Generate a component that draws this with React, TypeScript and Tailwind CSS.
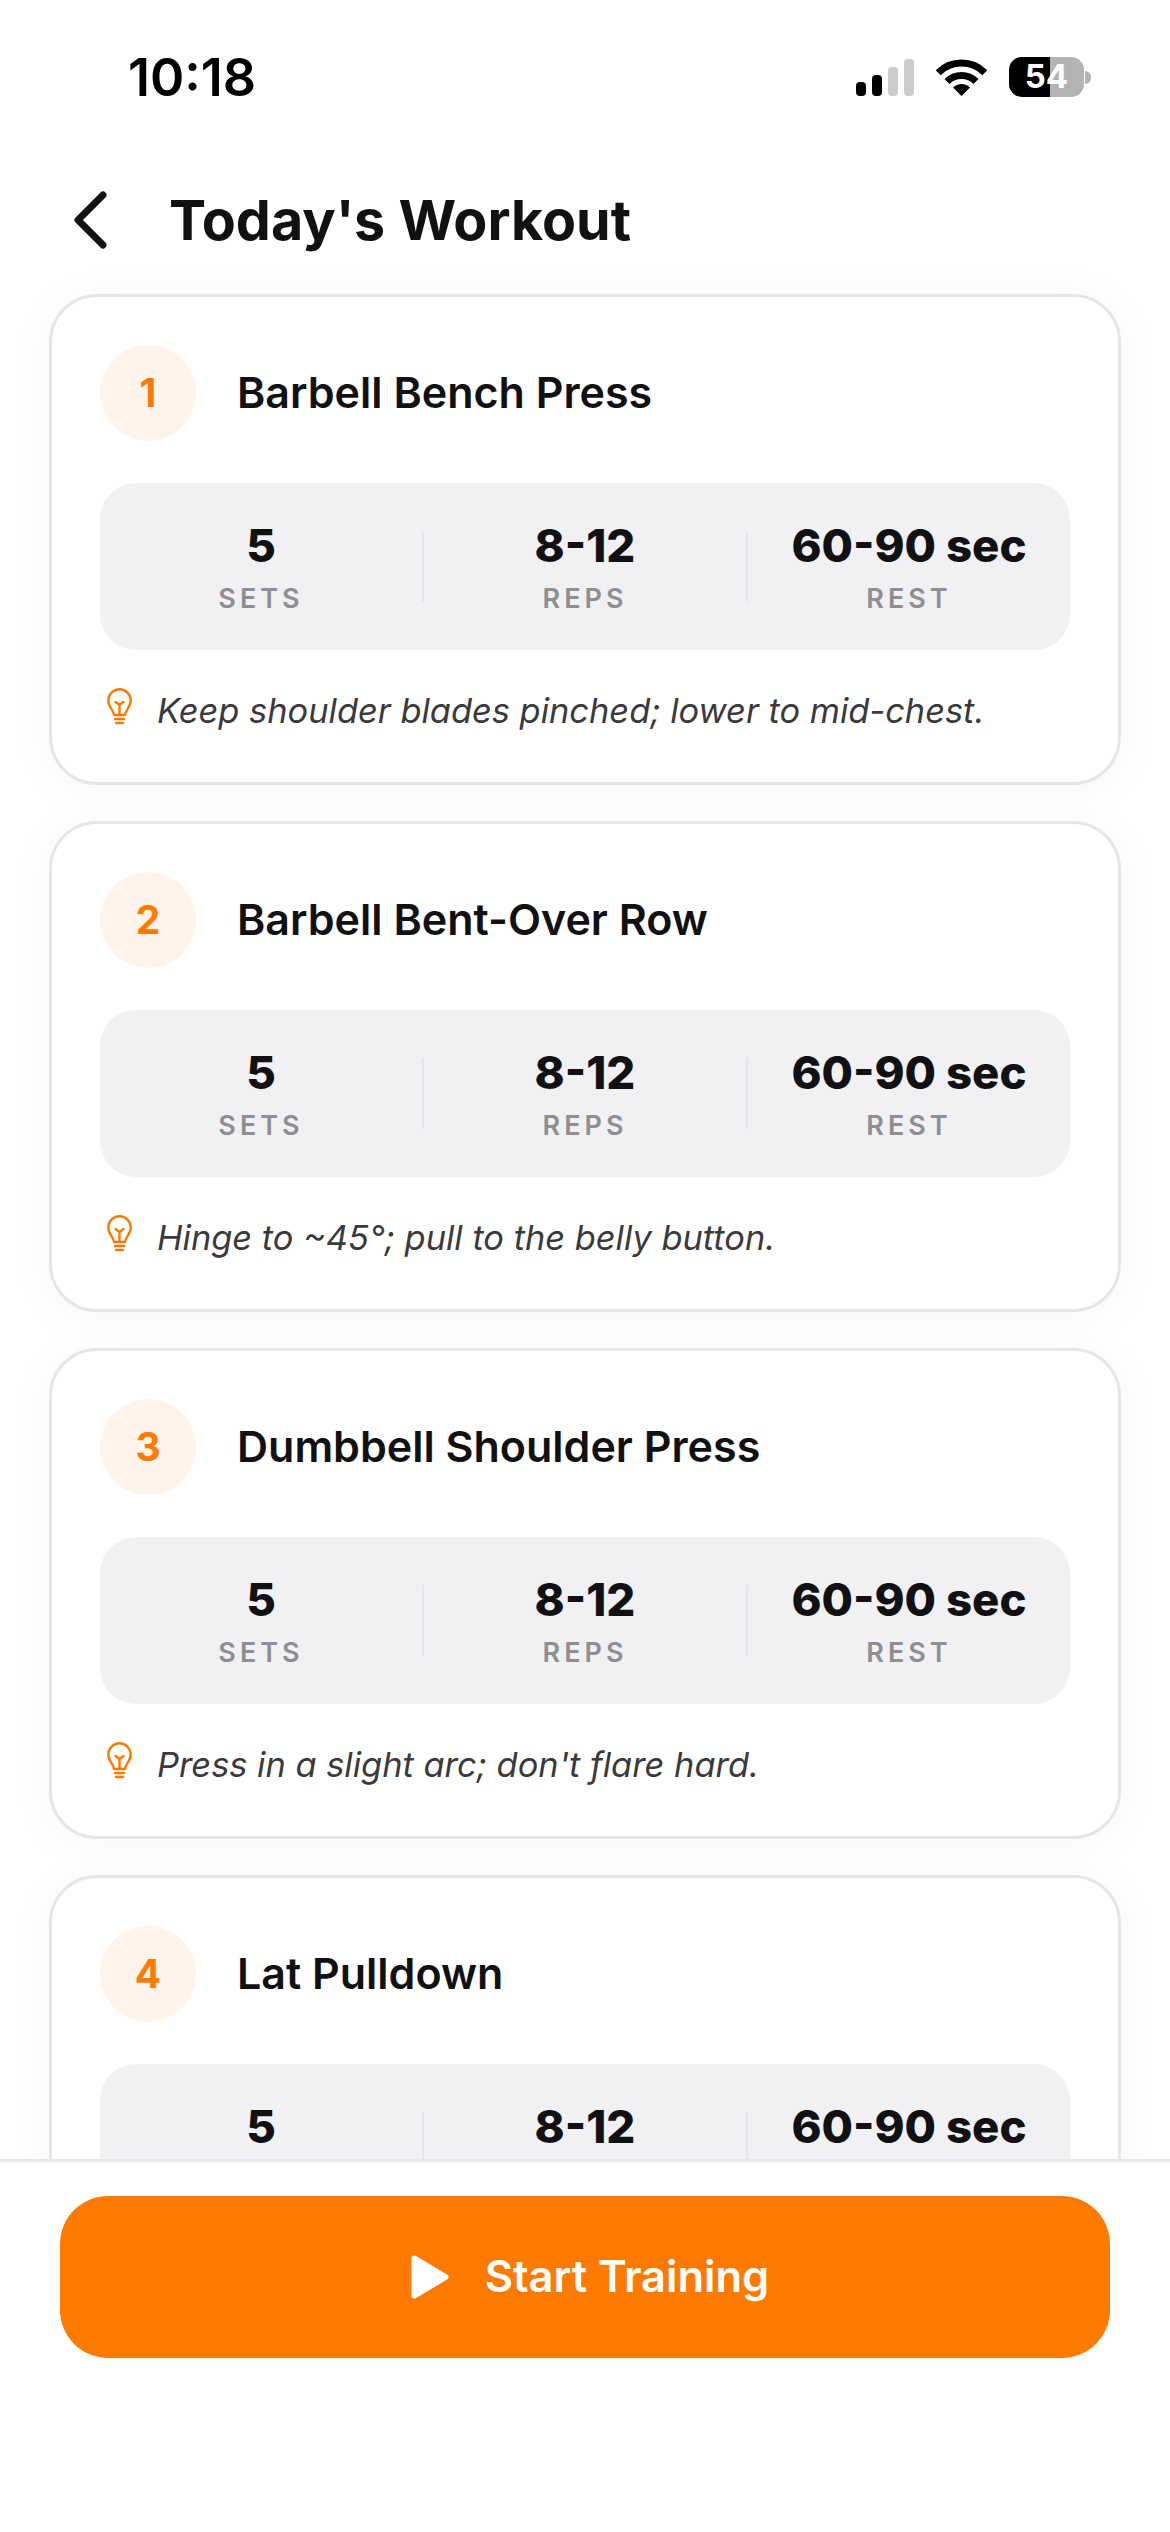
const exercises = [
  { name: "Barbell Bench Press", tip: "Keep shoulder blades pinched; lower to mid-chest." },
  { name: "Barbell Bent-Over Row", tip: "Hinge to ~45°; pull to the belly button." },
  { name: "Dumbbell Shoulder Press", tip: "Press in a slight arc; don't flare hard." },
  { name: "Lat Pulldown", tip: "Pull to the upper chest; keep your torso still." },
];

function Stat({ value, label }: { value: string; label: string }) {
  return (
    <div className="flex-1 flex flex-col items-center">
      <div className="text-[45.5px] leading-[56px] font-extrabold text-[#111113]">{value}</div>
      <div className="text-[27px] leading-[32px] mt-[9px] font-semibold tracking-[4px] text-[#8e8e93]">{label}</div>
    </div>
  );
}

function BulbIcon() {
  return (
    <svg width="25" height="37" viewBox="0 0 25 37" fill="none" stroke="#ff7a00" strokeWidth="2.4" strokeLinecap="round" strokeLinejoin="round" className="shrink-0 ml-[7px]">
      <path d="M7 27C7 22.5 1.3 19.5 1.3 12.5A11.2 11.2 0 0 1 23.7 12.5C23.7 19.5 18 22.5 18 27Z" />
      <path d="M12.5 27V16.5M8.5 14L12.5 17L16.5 14" />
      <path d="M8 31H17M9 35H16" />
    </svg>
  );
}

function ExerciseCard({ index, name, tip }: { index: number; name: string; tip: string }) {
  return (
    <div className="shrink-0 h-[491px] bg-white border-[3px] border-[#e5e5ea] rounded-[48px] p-[48px] shadow-[0_4px_48px_rgba(0,0,0,0.04)]">
      <div className="flex items-center gap-[41px]">
        <div className="w-[96px] h-[96px] rounded-full bg-[#fff4ec] flex items-center justify-center text-[39px] font-bold text-[#ff7a00]">
          {index}
        </div>
        <div className="text-[43px] font-semibold text-[#111113] -mt-[1px]">{name}</div>
      </div>

      <div className="mt-[42px] h-[167px] rounded-[36px] bg-[#f1f1f3] flex items-center">
        <Stat value="5" label="SETS" />
        <div className="w-[2px] h-[71px] bg-[#e5e5ea]" />
        <Stat value="8-12" label="REPS" />
        <div className="w-[2px] h-[71px] bg-[#e5e5ea]" />
        <Stat value="60-90 sec" label="REST" />
      </div>

      <div className="mt-[38px] flex items-start">
        <BulbIcon />
        <div className="ml-[25px] mt-[1px] text-[34.4px] leading-[44px] italic text-[#3a3a3c]">{tip}</div>
      </div>
    </div>
  );
}

export default function App() {
  return (
    <div className="w-[1170px] h-[2532px] bg-white flex flex-col overflow-hidden font-[Inter,sans-serif]">
      {/* status bar */}
      <div className="h-[176px] shrink-0 flex items-start justify-between pl-[128px] pr-[79px] pt-[47px]">
        <div className="text-[52px] leading-[62px] font-semibold text-black">10:18</div>
        <div className="flex items-center gap-[22px] mt-[10px]">
          <svg width="58" height="37" viewBox="0 0 58 37">
            <rect x="0" y="23" width="10" height="14" rx="4" fill="#000" />
            <rect x="16" y="16" width="10" height="21" rx="4" fill="#000" />
            <rect x="32" y="8" width="10" height="29" rx="4" fill="#ccc" />
            <rect x="48" y="0" width="10" height="37" rx="4" fill="#ccc" />
          </svg>
          <svg width="51" height="37" viewBox="0 0 51 37" fill="none">
            <path d="M2.2 13.7A33 33 0 0 1 48.8 13.7" stroke="#000" strokeWidth="7" />
            <path d="M11 22.5A20.5 20.5 0 0 1 40 22.5" stroke="#000" strokeWidth="7" />
            <path d="M25.5 37L17 28.5A12 12 0 0 1 34 28.5Z" fill="#000" />
          </svg>
          <div className="flex items-center">
            <div className="w-[75px] h-[40px] rounded-[13px] bg-[linear-gradient(90deg,#000_55%,#b3b3b3_55%)] flex items-center justify-center text-[33px] font-bold text-white">
              54
            </div>
            <div className="w-[6px] h-[13px] rounded-r-full bg-[#b3b3b3] ml-[1px]" />
          </div>
        </div>
      </div>

      {/* header */}
      <div className="h-[88px] shrink-0 flex items-center pl-[71px] gap-[60px]">
        <svg width="38" height="58" viewBox="0 0 38 58" fill="none">
          <path d="M32 4L7 29L32 54" stroke="#111113" strokeWidth="7" strokeLinecap="round" strokeLinejoin="round" />
        </svg>
        <h1 className="text-[55.6px] font-bold text-[#111113]">Today's Workout</h1>
      </div>

      {/* exercise list */}
      <div className="flex-1 min-h-0 overflow-hidden px-[49px] pt-[30px] flex flex-col gap-[36px]">
        {exercises.map((e, i) => (
          <ExerciseCard key={e.name} index={i + 1} name={e.name} tip={e.tip} />
        ))}
      </div>

      {/* bottom button */}
      <div className="h-[373px] shrink-0 bg-white border-t-[3px] border-[#e8e8ec] px-[60px] pt-[34px]">
        <div className="h-[162px] rounded-[48px] bg-[#ff7a00] flex items-center justify-center gap-[36px] pl-[10px]">
          <svg width="38" height="44" viewBox="0 0 38 44">
            <path d="M3.5 3.5L34.5 22L3.5 40.5Z" fill="#fff" stroke="#fff" strokeWidth="6" strokeLinejoin="round" />
          </svg>
          <span className="text-[43.5px] font-semibold text-white">Start Training</span>
        </div>
      </div>
    </div>
  );
}
